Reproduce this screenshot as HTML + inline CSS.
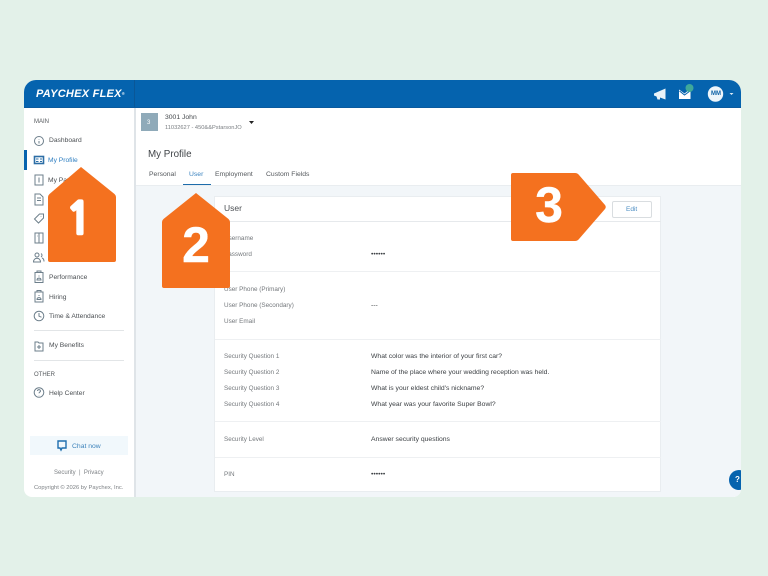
<!DOCTYPE html>
<html><head><meta charset="utf-8"><style>
html,body{margin:0;padding:0;width:768px;height:576px;overflow:hidden;background:#e3f1e9;font-family:"Liberation Sans",sans-serif}
#s{position:absolute;left:0;top:0;width:768px;height:576px;overflow:hidden;filter:blur(.35px)}
.a{position:absolute}
#app{position:absolute;left:24px;top:80px;width:717px;height:417px;background:#fff;border-radius:12px 12px 8px 8px;overflow:hidden}
.t{position:absolute;white-space:nowrap;font-size:6.800px;line-height:10px;color:#54585c}
.l{color:#74787c;font-size:6.350px}
.v{color:#3c4044;font-size:6.800px}
.n{font-size:6.700px;color:#4c5054}
.h{position:absolute;left:191px;width:446px;height:1px;background:#eef0f2}
svg{position:absolute;overflow:visible}
.i{fill:none;stroke:#6d7f8b;stroke-width:1}
.d{position:absolute;text-align:center;font-weight:bold;font-size:50px;line-height:60px;color:#fff;-webkit-text-stroke:.4px #fff}
</style></head><body><div id="s">
<div id="app">
 <div class="a" style="left:110px;top:28px;width:607px;height:389px;background:#fff"></div>
 <div class="a" style="left:111px;top:106px;width:606px;height:311px;background:#f2f6f9"></div>
 <div class="a" style="left:111px;top:105px;width:606px;height:1px;background:#e9edf0"></div>
 <div class="a" style="left:110px;top:28px;width:2px;height:389px;background:#dfe4e8"></div>
 <div class="a" style="left:0;top:0;width:717px;height:28px;background:#0563ae"></div>
 <div class="a" style="left:110px;top:0;width:1px;height:28px;background:#0a5797"></div>
 <div class="a" style="left:0;top:27px;width:717px;height:1px;background:#0a5a9e"></div>
 <div class="t" style="left:12px;top:7px;font-size:11px;line-height:14px;color:#fff;font-weight:bold;font-style:italic;letter-spacing:.25px">PAYCHEX FLEX<span style="font-size:4px;vertical-align:top">®</span></div>

 <!-- sidebar -->
 <div class="a" style="left:0;top:70px;width:3px;height:20px;background:#0563ae"></div>
 <div class="t" style="left:10px;top:37px;font-size:6px;color:#55595d">MAIN</div>
 <div class="t n" style="left:25px;top:56px">Dashboard</div>
 <div class="t n" style="left:24px;top:76px;color:#2f7fc1">My Profile</div>
 <div class="t n" style="left:24px;top:96px">My Pay</div>
 <div class="t n" style="left:25px;top:193px">Performance</div>
 <div class="t n" style="left:25px;top:213px">Hiring</div>
 <div class="t n" style="left:25px;top:232px">Time &amp; Attendance</div>
 <div class="t n" style="left:25px;top:261px">My Benefits</div>
 <div class="t" style="left:10px;top:290px;font-size:6px;color:#55595d">OTHER</div>
 <div class="t n" style="left:25px;top:309px">Help Center</div>
 <div class="a" style="left:10px;top:250px;width:90px;height:1px;background:#e2e5e7"></div>
 <div class="a" style="left:10px;top:280px;width:90px;height:1px;background:#e2e5e7"></div>
 <svg width="110" height="330" style="left:0;top:0">
  <circle class="i" cx="15" cy="61" r="4.5"/><path class="i" d="M15 59.5v.5M15 61v2.5"/>
  <rect x="10.500" y="76.500" width="9" height="7" fill="none" stroke="#2d6ea6" stroke-width="1.600"/><path d="M12 79h2.500M12 81.500h2.500M16 79h2M16 81.500h2" stroke="#2d6ea6"/>
  <rect class="i" x="11" y="95" width="8" height="10"/><path class="i" d="M15 97.500v5"/>
  <path class="i" d="M11 114h5l3 3v8h-8zM13 118h4M13 120.500h4"/>
  <path class="i" d="M10.500 139l5-5h4v4l-5 5zM17 136v.5"/>
  <path class="i" d="M11 153h8v10h-8zM15 153v10M13 156h0.500"/>
  <circle class="i" cx="13" cy="175" r="2"/><path class="i" d="M9.500 182c0-5 7-5 7 0zM17 173.500a2 2 0 010 3.500M18 178c1.500.5 2 2 2 3.500"/>
  <rect class="i" x="11" y="192.500" width="8" height="10"/><path class="i" d="M13 192v-1h4v1M13 200c0-2.500 4-2.500 4 0zM15 195.500v1"/>
  <rect class="i" x="11" y="212" width="8" height="10"/><path class="i" d="M13 211.500v-1h4v1M13 219.500c0-2.500 4-2.500 4 0zM15 215v1"/>
  <circle class="i" cx="15" cy="236" r="4.800"/><path class="i" d="M15 233v3.200l2.500 1"/>
  <path class="i" d="M11 262h3l1 1h4v8h-8zM13 267h4M15 265v4"/>
  <circle class="i" cx="15" cy="312.500" r="4.800"/><path class="i" d="M13.500 311a1.500 1.500 0 113 .3c-.3.700-1.500.8-1.500 2M15 315v.3"/>
 </svg>
 <div class="a" style="left:6px;top:356px;width:98px;height:19px;background:#f1f8fc"></div>
 <svg width="12" height="12" style="left:33px;top:360px"><path d="M1 1h8v7H5l-1 2-1-2H1z" fill="none" stroke="#1f6fae" stroke-width="1.400"/></svg>
 <div class="t" style="left:48px;top:362px;color:#3d83bb;font-size:6.800px">Chat now</div>
 <div class="t" style="left:30px;top:388px;font-size:6px;color:#7d8185">Security &nbsp;|&nbsp; Privacy</div>
 <div class="t" style="left:10px;top:403px;font-size:5.800px;color:#7d8185">Copyright © 2026 by Paychex, Inc.</div>

 <!-- top-right icons -->
 <svg width="100" height="28" style="left:617px;top:0">
  <path d="M13 13.500L24.500 8.500V19.500L19 17.500V19.500H16.500L15.500 16.500L13 15.500z" fill="#e9f2f8"/>
  <path d="M38 9.500l5.500 4 5-4 1 .5V19H38z" fill="#fff"/><path d="M38.500 11l5 4 5.500-4" fill="none" stroke="#0563ae" stroke-width="1"/>
  <circle cx="48.500" cy="8" r="4" fill="#3fa89a"/>
  <circle cx="74.500" cy="14" r="7.700" fill="#eef5fa"/>
  <path d="M88.500 13h4l-2 2z" fill="#dcebf5"/>
 </svg>
 <div class="t" style="left:687px;top:9px;font-size:6px;color:#0f62a6;font-weight:bold">MM</div>

 <!-- company -->
 <div class="a" style="left:117px;top:33px;width:17px;height:18px;background:#8faab9"></div>
 <div class="t" style="left:123px;top:38px;font-size:6px;color:#fff">3</div>
 <div class="t" style="left:141px;top:33px;color:#44484c">3001 John</div>
 <div class="t" style="left:141px;top:43px;font-size:5.700px;color:#7a7e82">11032627 - 450&amp;&amp;PstarsonJO</div>
 <svg width="6" height="4" style="left:225px;top:41px"><path d="M0 0h5L2.500 3z" fill="#222"/></svg>
 <div class="t" style="left:124px;top:68px;font-size:9.800px;line-height:13px;color:#404448">My Profile</div>
 <div class="t" style="left:125px;top:90px">Personal</div>
 <div class="t" style="left:165px;top:90px;color:#3b83bf">User</div>
 <div class="t" style="left:191px;top:90px">Employment</div>
 <div class="t" style="left:242px;top:90px">Custom Fields</div>
 <div class="a" style="left:159px;top:103.500px;width:28px;height:1.500px;background:#1d6cab"></div>

 <!-- card -->
 <div class="a" style="left:190px;top:116px;width:447px;height:296px;background:#fff;border:1px solid #e9edf0;box-sizing:border-box"></div>
 <div class="h" style="top:141px;background:#e6e9ec"></div>
 <div class="h" style="top:191px"></div>
 <div class="h" style="top:259px"></div>
 <div class="h" style="top:341px"></div>
 <div class="h" style="top:377px"></div>
 <div class="t" style="left:200px;top:123px;font-size:8.500px;color:#4c5054">User</div>
 <div class="a" style="left:588px;top:121px;width:40px;height:17px;box-sizing:border-box;background:#fff;border:1px solid #d9dde0;border-radius:2px"></div>
 <div class="t" style="left:602px;top:125px;font-size:6.500px;color:#4a8cc2">Edit</div>
 <div class="t l" style="left:200px;top:154px">Username</div>
 <div class="t l" style="left:200px;top:170px">Password</div>
 <div class="t v" style="left:347px;top:170px">••••••</div>
 <div class="t l" style="left:200px;top:205px">User Phone (Primary)</div>
 <div class="t l" style="left:200px;top:221px">User Phone (Secondary)</div>
 <div class="t v" style="left:347px;top:221px">---</div>
 <div class="t l" style="left:200px;top:237px">User Email</div>
 <div class="t l" style="left:200px;top:272px">Security Question 1</div>
 <div class="t l" style="left:200px;top:288px">Security Question 2</div>
 <div class="t l" style="left:200px;top:304px">Security Question 3</div>
 <div class="t l" style="left:200px;top:320px">Security Question 4</div>
 <div class="t v" style="left:347px;top:272px">What color was the interior of your first car?</div>
 <div class="t v" style="left:347px;top:288px">Name of the place where your wedding reception was held.</div>
 <div class="t v" style="left:347px;top:304px">What is your eldest child's nickname?</div>
 <div class="t v" style="left:347px;top:320px">What year was your favorite Super Bowl?</div>
 <div class="t l" style="left:200px;top:355px">Security Level</div>
 <div class="t v" style="left:347px;top:355px">Answer security questions</div>
 <div class="t l" style="left:200px;top:390px">PIN</div>
 <div class="t v" style="left:347px;top:390px">••••••</div>

 <!-- help -->
 <div class="a" style="left:705px;top:390px;width:20px;height:20px;border-radius:50%;background:#0563ae"></div>
 <div class="t" style="left:711px;top:395px;font-size:8px;color:#fff;font-weight:bold">?</div>
</div>

<!-- badges -->
<svg width="768" height="576" style="left:0;top:0">
 <path d="M81 167L114.500 194Q116 195.500 116 197V260Q116 262 114 262H50Q48 262 48 260V197Q48 195.500 49.500 194Z" fill="#f4711f"/>
 <path d="M196 193L228.500 219Q230 220.500 230 222V286Q230 288 228 288H164Q162 288 162 286V222Q162 220.500 163.500 219Z" fill="#f4711f"/>
 <path d="M513 173H575Q577.500 173 579 175L605 205Q606.500 207 605 209L579 239Q577.500 241 575 241H513Q511 241 511 239V175Q511 173 513 173Z" fill="#f4711f"/>
</svg>
<div class="d" style="left:48px;top:189px;width:62px;font-family:NanumGothic,'Liberation Sans',sans-serif;font-size:44px;-webkit-text-stroke:2.5px #fff">1</div>
<div class="d" style="left:162px;top:215px;width:68px">2</div>
<div class="d" style="left:511px;top:175px;width:76px">3</div>
</div></body></html>
